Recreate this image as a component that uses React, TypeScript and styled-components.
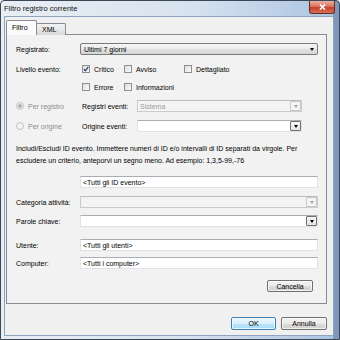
import React from 'react';
import styled, { createGlobalStyle } from 'styled-components';

const GlobalStyle = createGlobalStyle`
  html, body {
    margin: 0;
    padding: 0;
  }
  body {
    width: 340px;
    height: 340px;
    overflow: hidden;
    font-family: "Liberation Sans", Arial, sans-serif;
    font-size: 7px;
    color: #000;
  }
  * {
    box-sizing: border-box;
  }
`;

const Window = styled.div`
  width: 340px;
  height: 340px;
  display: flex;
  flex-direction: column;
  border: 1px solid #3b4757;
  border-radius: 4px 4px 0 0;
  background:
    linear-gradient(90deg, rgba(255, 255, 255, 0) 0%, rgba(255, 255, 255, 0) 98%, rgba(40, 70, 110, 0.35) 98.5%, rgba(40, 70, 110, 0.35) 100%),
    linear-gradient(90deg, #e9eef4 0%, #d8e3ef 55%, #a9c3e2 100%);
  padding: 0 5px 3px 3px;
`;

const TitleBar = styled.div`
  height: 15px;
  display: flex;
  align-items: flex-start;
  justify-content: space-between;
`;

const Title = styled.span`
  font-size: 7.5px;
  line-height: 15px;
  color: #111;
`;

const CloseButton = styled.div`
  width: 26px;
  height: 13px;
  margin-right: -1px;
  border: 1px solid #6b2a1e;
  border-top: none;
  border-radius: 0 0 3px 3px;
  background: linear-gradient(180deg, #eab1a3 0%, #d9735e 45%, #c4412a 55%, #d5705a 100%);
  display: flex;
  align-items: center;
  justify-content: center;
`;

const Client = styled.div`
  flex: 1;
  background: #f0f0f0;
  border: 1px solid #8ea4be;
  padding: 3px 6px 0 1px;
  display: flex;
  flex-direction: column;
`;

const TabStrip = styled.div`
  height: 15px;
  display: flex;
  align-items: flex-end;
`;

const Tab = styled.div<{ $active?: boolean; $width: number }>`
  position: relative;
  z-index: ${(p) => (p.$active ? 2 : 1)};
  width: ${(p) => p.$width}px;
  height: ${(p) => (p.$active ? 15 : 12)}px;
  margin-left: ${(p) => (p.$active ? 0 : -1)}px;
  border: 1px solid #898c95;
  border-bottom: none;
  border-radius: 2px 2px 0 0;
  background: ${(p) => (p.$active ? '#fbfbfb' : 'linear-gradient(180deg, #f3f3f3 0%, #e6e6e6 50%, #d8d8d8 100%)')};
  padding-left: 5px;
  line-height: ${(p) => (p.$active ? 13 : 11)}px;
`;

const Panel = styled.div`
  height: 270px;
  margin-top: -1px;
  border: 1px solid #898c95;
  background: #f2f2f2;
  padding: 0 8px 0 9px;
  display: flex;
  flex-direction: column;
`;

const Row = styled.div<{ $mt: number }>`
  height: 12px;
  margin-top: ${(p) => p.$mt}px;
  display: flex;
  align-items: center;
`;

const Label = styled.span<{ $width: number; $disabled?: boolean }>`
  width: ${(p) => p.$width}px;
  flex-shrink: 0;
  white-space: nowrap;
  color: ${(p) => (p.$disabled ? '#8d8d8d' : '#000')};
`;

const Field = styled.div<{ $disabled?: boolean; $width?: number }>`
  ${(p) => (p.$width ? `width: ${p.$width}px;` : 'flex: 1;')}
  height: 12px;
  display: flex;
  align-items: center;
  justify-content: space-between;
  background: ${(p) => (p.$disabled ? '#f4f4f4' : '#fff')};
  border: 1px solid ${(p) => (p.$disabled ? '#c9cbcf' : '#dfe3e8')};
  border-top-color: ${(p) => (p.$disabled ? '#b9bcc0' : '#abadb3')};
  padding-left: 2px;
  color: ${(p) => (p.$disabled ? '#9a9a9a' : '#000')};
  white-space: nowrap;
`;

const ComboButton = styled.div`
  flex: 1;
  height: 12px;
  display: flex;
  align-items: center;
  justify-content: space-between;
  border: 1px solid #7a7a7a;
  border-radius: 2px;
  background: linear-gradient(180deg, #f4f4f4 0%, #ececec 50%, #e1e1e1 51%, #d6d6d6 100%);
  padding: 0 3px 0 3px;
`;

const DropButton = styled.div<{ $disabled?: boolean }>`
  width: 11px;
  height: 10px;
  display: flex;
  align-items: center;
  justify-content: center;
  border: 1px solid ${(p) => (p.$disabled ? '#c8c8c8' : '#707070')};
  border-radius: 1px;
  background: ${(p) =>
    p.$disabled ? '#f4f4f4' : 'linear-gradient(180deg, #f6f6f6 0%, #e4e4e4 100%)'};
`;

const Arrow = styled.span<{ $color?: string }>`
  width: 0;
  height: 0;
  border-left: 2.5px solid transparent;
  border-right: 2.5px solid transparent;
  border-top: 3px solid ${(p) => p.$color || '#000'};
`;

const Group = styled.div<{ $width?: number }>`
  ${(p) => (p.$width ? `width: ${p.$width}px;` : '')}
  display: flex;
  align-items: center;
  gap: 4px;
  flex-shrink: 0;
  white-space: nowrap;
`;

const Box = styled.span`
  width: 8px;
  height: 8px;
  border: 1px solid #8e8f8f;
  background: linear-gradient(135deg, #dedede 0%, #fbfbfb 100%);
  display: flex;
  align-items: center;
  justify-content: center;
`;

const RadioDot = styled.span<{ $checked?: boolean }>`
  width: 8px;
  height: 8px;
  border-radius: 50%;
  border: 1px solid #c2c2c2;
  background: #f3f3f3;
  display: flex;
  align-items: center;
  justify-content: center;

  &::after {
    content: '';
    width: 4px;
    height: 4px;
    border-radius: 50%;
    background: ${(p) => (p.$checked ? '#b0b0b0' : 'transparent')};
  }
`;

const Indent = styled.div<{ $width: number }>`
  width: ${(p) => p.$width}px;
  flex-shrink: 0;
`;

const Paragraph = styled.div`
  margin-top: 11px;
  line-height: 12px;
  white-space: nowrap;

  span {
    display: block;
  }
`;

const ButtonRow = styled.div<{ $mt: number; $pr: number }>`
  margin-top: ${(p) => p.$mt}px;
  padding-right: ${(p) => p.$pr}px;
  display: flex;
  justify-content: flex-end;
  gap: 5px;
`;

const Button = styled.div<{ $width: number; $primary?: boolean }>`
  width: ${(p) => p.$width}px;
  height: ${(p) => (p.$primary !== undefined ? 13 : 12)}px;
  display: flex;
  align-items: center;
  justify-content: center;
  border: 1px solid ${(p) => (p.$primary ? '#3c7fb1' : '#707070')};
  border-radius: 2px;
  background: ${(p) =>
    p.$primary
      ? 'linear-gradient(180deg, #eaf6fd 0%, #d9f0fc 50%, #bee6fd 51%, #a7d9f5 100%)'
      : 'linear-gradient(180deg, #f2f2f2 0%, #ebebeb 50%, #dddddd 51%, #cfcfcf 100%)'};
  box-shadow: inset 0 0 0 1px rgba(255, 255, 255, 0.7);
`;

function Check({ checked }: { checked?: boolean }) {
  return (
    <Box>
      {checked && (
        <svg width="6" height="6" viewBox="0 0 6 6">
          <path d="M0.8 3.1 L2.4 4.8 L5.3 0.9" fill="none" stroke="#2a3f78" strokeWidth="1.3" />
        </svg>
      )}
    </Box>
  );
}

export default function App() {
  return (
    <>
      <GlobalStyle />
      <Window>
        <TitleBar>
          <Title>Filtro registro corrente</Title>
          <CloseButton>
            <svg width="7" height="6" viewBox="0 0 7 6">
              <path d="M1 0.5 L6 5.5 M6 0.5 L1 5.5" stroke="#fff" strokeWidth="1.6" />
            </svg>
          </CloseButton>
        </TitleBar>
        <Client>
          <TabStrip>
            <Tab $active $width={31}>Filtro</Tab>
            <Tab $width={30}>XML</Tab>
          </TabStrip>
          <Panel>
            <Row $mt={8}>
              <Label $width={64}>Registrato:</Label>
              <ComboButton>
                <span>Ultimi 7 giorni</span>
                <Arrow />
              </ComboButton>
            </Row>

            <Row $mt={8}>
              <Label $width={66}>Livello evento:</Label>
              <Group $width={42}>
                <Check checked />
                Critico
              </Group>
              <Group $width={60}>
                <Check />
                Avviso
              </Group>
              <Group>
                <Check />
                Dettagliato
              </Group>
            </Row>
            <Row $mt={6}>
              <Indent $width={66} />
              <Group $width={42}>
                <Check />
                Errore
              </Group>
              <Group>
                <Check />
                Informazioni
              </Group>
            </Row>

            <Row $mt={7}>
              <Group $width={66}>
                <RadioDot $checked />
                <Label $width={50} $disabled>Per registro</Label>
              </Group>
              <Label $width={55}>Registri eventi:</Label>
              <Field $disabled $width={165}>
                <span>Sistema</span>
                <DropButton $disabled>
                  <Arrow $color="#a8a8a8" />
                </DropButton>
              </Field>
            </Row>
            <Row $mt={8}>
              <Group $width={66}>
                <RadioDot />
                <Label $width={50} $disabled>Per origine</Label>
              </Group>
              <Label $width={55}>Origine eventi:</Label>
              <Field $width={165}>
                <span />
                <DropButton>
                  <Arrow />
                </DropButton>
              </Field>
            </Row>

            <Paragraph>
              <span>Includi/Escludi ID evento. Immettere numeri di ID e/o intervalli di ID separati da virgole. Per</span>
              <span>escludere un criterio, anteporvi un segno meno. Ad esempio: 1,3,5-99,-76</span>
            </Paragraph>

            <Row $mt={9}>
              <Indent $width={64} />
              <Field>&lt;Tutti gli ID evento&gt;</Field>
            </Row>
            <Row $mt={8}>
              <Label $width={64}>Categoria attività:</Label>
              <Field $disabled>
                <span />
                <DropButton $disabled>
                  <Arrow $color="#a8a8a8" />
                </DropButton>
              </Field>
            </Row>
            <Row $mt={7}>
              <Label $width={64}>Parole chiave:</Label>
              <Field>
                <span />
                <DropButton>
                  <Arrow />
                </DropButton>
              </Field>
            </Row>
            <Row $mt={12}>
              <Label $width={64}>Utente:</Label>
              <Field>&lt;Tutti gli utenti&gt;</Field>
            </Row>
            <Row $mt={6}>
              <Label $width={64}>Computer:</Label>
              <Field>&lt;Tutti i computer&gt;</Field>
            </Row>
            <ButtonRow $mt={11} $pr={5}>
              <Button $width={46}>Cancella</Button>
            </ButtonRow>
          </Panel>
          <ButtonRow $mt={13} $pr={0}>
            <Button $width={45} $primary>OK</Button>
            <Button $width={46} $primary={false}>Annulla</Button>
          </ButtonRow>
        </Client>
      </Window>
    </>
  );
}
